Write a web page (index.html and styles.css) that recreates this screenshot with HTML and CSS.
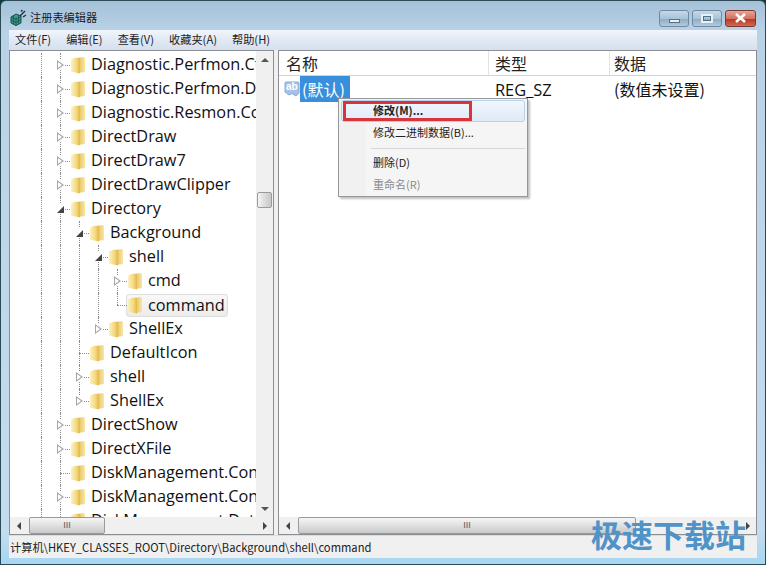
FILE: index.html
```html
<!DOCTYPE html>
<html lang="zh-CN">
<head>
    <meta charset="UTF-8">
    <title>注册表编辑器</title>
    <link rel="stylesheet" href="styles.css">
</head>
<body>
    <svg width="0" height="0" class="defs">
        <defs>
            <linearGradient id="fold" x1="0" y1="0" x2="1" y2="0">
                <stop offset="0" stop-color="#fbf1c0"/>
                <stop offset="0.6" stop-color="#f4da80"/>
                <stop offset="1" stop-color="#e3b54e"/>
            </linearGradient>
            <linearGradient id="foldBack" x1="0" y1="0" x2="1" y2="0">
                <stop offset="0" stop-color="#c9962f"/>
                <stop offset="0.4" stop-color="#eccb6c"/>
                <stop offset="1" stop-color="#f6e7a8"/>
            </linearGradient>
            <symbol id="folder" viewBox="0 0 16 18">
                <path d="M7 2 14 1 15 2.5V16L8 17Z" fill="url(#foldBack)"/>
                <path d="M1 3.5 6 1.5 10 3V17.5L5 16.5 1 15.5Z" fill="url(#fold)"/>
            </symbol>
        </defs>
    </svg>

    <div class="window">
        <header class="titlebar">
            <svg class="app-icon" width="17" height="17" viewBox="0 0 17 17">
                <path d="M1 8 6 5 11 7V14L6 16.5 1 14Z" fill="#3d9a8c" stroke="#17504c"/>
                <path d="M6 8.5V16.5M1 8 6 10.5 11 7.5M1 11 6 13.5 11 10.5M3.5 6.5V15.5M8.5 6V15" stroke="#17504c" stroke-width="0.8" fill="none"/>
                <path d="M10 7 15 2M11 2.5 12.5 1M13 8 16 6" stroke="#26393a" stroke-width="1.5"/>
            </svg>
            <span class="app-title">注册表编辑器</span>
            <div class="caption-btns">
                <div class="cap-btn"><span class="min-glyph"></span></div>
                <div class="cap-btn"><span class="max-glyph"></span></div>
                <div class="cap-btn close">
                    <svg width="13" height="10" viewBox="0 0 13 10">
                        <path d="M2 1 11 9M11 1 2 9" stroke="#fff" stroke-width="2.6"/>
                    </svg>
                </div>
            </div>
        </header>

        <nav class="menubar">
            <span>文件(F)</span>
            <span>编辑(E)</span>
            <span>查看(V)</span>
            <span>收藏夹(A)</span>
            <span>帮助(H)</span>
        </nav>

        <main class="panes">
            <section class="tree-pane">
                <div class="tree-body">
                    <ul class="tree" id="tree"></ul>
                    <div class="vscroll">
                        <div class="sb-btn"><span class="arr up"></span></div>
                        <div class="vtrack"><div class="vthumb"></div></div>
                        <div class="sb-btn"><span class="arr down"></span></div>
                    </div>
                </div>
                <div class="hscroll">
                    <div class="sb-btn"><span class="arr left"></span></div>
                    <div class="htrack"><div class="hthumb"><span class="grip">III</span></div></div>
                    <div class="sb-btn"><span class="arr right"></span></div>
                </div>
            </section>

            <section class="list-pane">
                <div class="list-head">
                    <div class="col col-name">名称</div>
                    <div class="col col-type">类型</div>
                    <div class="col col-data">数据</div>
                </div>
                <div class="list-body">
                    <div class="list-row">
                        <div class="col-name value-cell">
                            <svg class="ab-icon" width="16" height="16" viewBox="0 0 16 16">
                                <path d="M1 2Q1 1 2 1H14Q15 1 15 2V12L12 15 8 12.5 5 14 1 11Z" fill="#a6c2ea" stroke="#8aa8d2"/>
                            </svg>
                            <span class="ab-text">ab</span>
                            <span class="value-name">(默认)</span>
                        </div>
                        <div class="col-type">REG_SZ</div>
                        <div class="col-data">(数值未设置)</div>
                    </div>
                </div>
                <div class="hscroll">
                    <div class="sb-btn"><span class="arr left"></span></div>
                    <div class="htrack"><div class="hthumb wide"><span class="grip">III</span></div></div>
                    <div class="sb-btn"><span class="arr right"></span></div>
                </div>

                <div class="context-menu">
                    <div class="menu-item hot"><b>修改(M)...</b></div>
                    <div class="menu-item">修改二进制数据(B)...</div>
                    <div class="menu-sep"></div>
                    <div class="menu-item">删除(D)</div>
                    <div class="menu-item off">重命名(R)</div>
                </div>
            </section>
        </main>

        <footer class="statusbar">计算机\HKEY_CLASSES_ROOT\Directory\Background\shell\command</footer>
    </div>

    <div class="watermark">极速下载站</div>

    <script src="tree.js"></script>
</body>
</html>
```

FILE: styles.css
```css
* {
    margin: 0;
    padding: 0;
    box-sizing: border-box;
}

html, body {
    width: 766px;
    height: 565px;
    overflow: hidden;
}

body {
    position: relative;
    background: #0e3a44;
    font-family: "Noto Sans CJK SC", "Noto Sans", sans-serif;
    color: #111;
}

.defs {
    position: absolute;
}

.window {
    height: 565px;
    display: flex;
    flex-direction: column;
    padding: 0 8px 6px;
    border: 1px solid #2c4a55;
    border-radius: 6px 6px 0 0;
    background: linear-gradient(180deg, #a4c1d9 0, #b9d2e6 30px, #c4dcef 530px, #a6d6f2 100%);
}

.titlebar {
    height: 29px;
    flex: none;
    display: flex;
    align-items: center;
}

.app-icon {
    margin: 3px 0 0 1px;
}

.app-title {
    margin: 3px 0 0 3px;
    font-size: 11.2px;
    color: #1a1a1a;
}

.caption-btns {
    margin-left: auto;
    margin-right: 1px;
    margin-top: 5px;
    display: flex;
    gap: 3px;
}

.cap-btn {
    width: 30px;
    height: 17px;
    border: 1px solid #6f8aa0;
    border-radius: 3px;
    background: linear-gradient(180deg, #c5d9e8 0, #a9c3d8 50%, #8fadc6 55%, #b2cadc 100%);
    display: flex;
    align-items: center;
    justify-content: center;
}

.cap-btn.close {
    width: 31px;
    border-color: #7a3a34;
    background: linear-gradient(180deg, #e6a597 0, #d4705f 50%, #b73a26 55%, #cf6a50 100%);
}

.min-glyph {
    display: block;
    width: 11px;
    height: 4px;
    margin-top: 5px;
    background: #e8f0f6;
    border: 1px solid #55718a;
}

.max-glyph {
    display: block;
    width: 12px;
    height: 9px;
    border: 2px solid #e8f0f6;
    outline: 1px solid #55718a;
    outline-offset: -3px;
}

.menubar {
    height: 20px;
    flex: none;
    display: flex;
    align-items: center;
    gap: 15px;
    padding: 0 0 2px 6px;
    font-size: 11.2px;
    color: #222;
    background: linear-gradient(180deg, #f2f6fb 0, #e0e9f4 50%, #d6e0ee 100%);
}

.panes {
    flex: 1;
    min-height: 0;
    display: flex;
    gap: 4px;
    background: #f0f0f0;
}

.tree-pane,
.list-pane {
    display: flex;
    flex-direction: column;
    background: #fff;
    border: 1px solid #8b8f94;
    height: 485px;
}

.tree-pane {
    width: 265px;
    flex: none;
}

.list-pane {
    flex: 1;
    min-width: 0;
    position: relative;
}

.tree-body {
    flex: 1;
    min-height: 0;
    display: flex;
}

.tree {
    flex: 1;
    min-width: 0;
    overflow: hidden;
    list-style: none;
    padding: 2px 0 0 22px;
    font-family: "Open Sans", "Noto Sans", sans-serif;
    font-size: 16.3px;
    color: #111;
}

.tree-row {
    height: 24px;
    display: flex;
    align-items: center;
    white-space: nowrap;
}

.guide {
    width: 19px;
    height: 24px;
    flex: none;
    position: relative;
}

.guide.line::before {
    content: "";
    position: absolute;
    left: 9px;
    top: 0;
    bottom: 0;
    border-left: 1px dotted #8a8a8a;
}

.guide.half::before {
    content: "";
    position: absolute;
    left: 9px;
    top: 0;
    bottom: 12px;
    border-left: 1px dotted #8a8a8a;
}

.guide.stub::after {
    content: "";
    position: absolute;
    left: 9px;
    top: 12px;
    width: 10px;
    border-top: 1px dotted #8a8a8a;
}

.twisty {
    position: absolute;
    left: 5px;
    top: 7px;
    width: 8px;
    height: 10px;
    background: #fff;
    z-index: 1;
}

.twisty.closed::before {
    content: "";
    position: absolute;
    left: 1px;
    top: 0;
    border-left: 7px solid #a6a6a6;
    border-top: 5px solid transparent;
    border-bottom: 5px solid transparent;
}

.twisty.closed::after {
    content: "";
    position: absolute;
    left: 2px;
    top: 2px;
    border-left: 4px solid #fff;
    border-top: 3px solid transparent;
    border-bottom: 3px solid transparent;
}

.twisty.open::before {
    content: "";
    position: absolute;
    left: 1px;
    top: 2px;
    border-right: 7px solid #444;
    border-top: 7px solid transparent;
}

.folder {
    width: 16px;
    height: 18px;
    flex: none;
}

.tree-label {
    margin-left: 5px;
    padding: 0 3px 1px 0;
    height: 22px;
    line-height: 21px;
    display: block;
}

.tree-row.current .folder {
    position: relative;
    z-index: 1;
}

.tree-row.current .tree-label {
    margin-left: -17px;
    padding: 0 2px 0 21px;
    background: linear-gradient(180deg, #f8f8f8, #ececec);
    border: 1px solid #dedede;
    border-radius: 3px;
    height: 23px;
    line-height: 20px;
}

.vscroll {
    width: 17px;
    flex: none;
    display: flex;
    flex-direction: column;
    background: #f0f0f0;
}

.vtrack {
    flex: 1;
    padding-top: 124px;
}

.vthumb {
    height: 16px;
    margin: 0 1px;
    border: 1px solid #9a9a9a;
    border-radius: 2px;
    background: linear-gradient(90deg, #f4f4f4, #dcdcdc 50%, #c8c8c8);
}

.sb-btn {
    width: 17px;
    height: 17px;
    flex: none;
    display: flex;
    align-items: center;
    justify-content: center;
}

.arr {
    display: block;
    width: 0;
    height: 0;
}

.arr.up {
    border-left: 4px solid transparent;
    border-right: 4px solid transparent;
    border-bottom: 4px solid #555;
}

.arr.down {
    border-left: 4px solid transparent;
    border-right: 4px solid transparent;
    border-top: 4px solid #555;
}

.arr.left {
    border-top: 4px solid transparent;
    border-bottom: 4px solid transparent;
    border-right: 4px solid #444;
}

.arr.right {
    border-top: 4px solid transparent;
    border-bottom: 4px solid transparent;
    border-left: 4px solid #444;
}

.hscroll {
    height: 17px;
    flex: none;
    display: flex;
    background: #f0f0f0;
}

.htrack {
    flex: 1;
    display: flex;
    padding-left: 2px;
}

.hthumb {
    width: 76px;
    height: 17px;
    border: 1px solid #9a9a9a;
    border-radius: 2px;
    background: linear-gradient(180deg, #f6f6f6, #e0e0e0 50%, #c9c9c9);
    display: flex;
    align-items: center;
    justify-content: center;
}

.hthumb.wide {
    width: 338px;
}

.grip {
    font: 9px/1 "Liberation Sans", sans-serif;
    color: #555;
}

.list-head {
    height: 25px;
    flex: none;
    display: flex;
    border-bottom: 1px solid #d5d5d5;
    font-size: 16px;
    color: #222;
}

.col {
    padding-left: 7px;
    line-height: 25px;
    border-right: 1px solid #e3e3e3;
}

.col-name {
    width: 210px;
}

.col-type {
    width: 121px;
}

.col-data {
    flex: 1;
    border-right: 0;
}

.col.col-type {
    padding-left: 6px;
}

.col.col-data {
    padding-left: 4px;
}

.list-body {
    flex: 1;
    min-height: 0;
}

.list-row {
    height: 26px;
    display: flex;
    align-items: center;
    font-size: 16px;
}

.list-row .col-type {
    padding-left: 6px;
    font-family: "Open Sans", "Noto Sans", sans-serif;
    font-size: 16.4px;
}

.list-row .col-data {
    padding-left: 4px;
}

.value-cell {
    display: flex;
    align-items: center;
    padding-left: 5px;
    position: relative;
}

.ab-text {
    position: absolute;
    left: 7px;
    top: 5px;
    font: bold 10px/12px "Liberation Sans", sans-serif;
    color: #fff;
}

.value-name {
    height: 26px;
    line-height: 26px;
    padding: 0 5px 0 2px;
    color: #fff;
    background: #3a8fdd;
}

.context-menu {
    position: absolute;
    left: 59px;
    top: 47px;
    width: 190px;
    height: 99px;
    padding: 1px 2px;
    border: 1px solid #979797;
    background: linear-gradient(90deg, #f1f1f1 0, #f1f1f1 26px, #e3e3e3 26px, #fff 27px, #f5f5f5 27px);
    font-size: 11px;
    box-shadow: 2px 2px 2px rgba(0, 0, 0, 0.25);
}

.menu-item {
    height: 22px;
    line-height: 20px;
    padding-left: 32px;
    color: #222;
}

.menu-item.hot {
    border: 1px solid #b8d2ee;
    border-radius: 3px;
    background: linear-gradient(180deg, #f3f7fc, #dfe9f8);
    line-height: 18px;
    padding-left: 31px;
}

/* red annotation box, pseudo elements are not border-box here */
.menu-item.hot::after {
    content: "";
    position: absolute;
    left: 4px;
    top: 2px;
    width: 123px;
    height: 14px;
    border: 3px solid #d8343a;
}

.menu-item.off {
    color: #8a8a8a;
}

.menu-sep {
    height: 1px;
    margin: 4px 0 3px 30px;
    background: #d7d7d7;
}

.statusbar {
    height: 23px;
    flex: none;
    padding-left: 1px;
    font-size: 11.2px;
    line-height: 22px;
    color: #222;
    background: #f0f0f0;
    border-top: 1px solid #dcdcdc;
}

.watermark {
    position: absolute;
    right: 20px;
    top: 516px;
    font-size: 31px;
    line-height: 36px;
    font-weight: 700;
    color: #4f93c9;
}
```

FILE: tree.js
```js
// guides: one entry per column, "|" line, "." last child
const rows = [
    ["Diagnostic.Perfmon.Ctl", 0, "closed", "|"],
    ["Diagnostic.Perfmon.Data", 0, "closed", "|"],
    ["Diagnostic.Resmon.Config", 0, "closed", "|"],
    ["DirectDraw", 0, "closed", "|"],
    ["DirectDraw7", 0, "closed", "|"],
    ["DirectDrawClipper", 0, "closed", "|"],
    ["Directory", 0, "open", "|"],
    ["Background", 1, "open", "||"],
    ["shell", 2, "open", "|||"],
    ["cmd", 3, "closed", "||||"],
    ["command", 3, "", "|||.", "current"],
    ["ShellEx", 2, "closed", "||."],
    ["DefaultIcon", 1, "", "||"],
    ["shell", 1, "closed", "||"],
    ["ShellEx", 1, "closed", "|."],
    ["DirectShow", 0, "closed", "|"],
    ["DirectXFile", 0, "closed", "|"],
    ["DiskManagement.Connection", 0, "", "|"],
    ["DiskManagement.Control", 0, "closed", "|"],
    ["DiskManagement.DataObject", 0, "", "|"],
];

function rowHtml([label, level, state, guides, extra]) {
    let cols = '<span class="guide line"></span>';
    for (let i = 0; i < level; i++) {
        cols += `<span class="guide ${guides[i] === "." ? "" : "line"}"></span>`;
    }
    const last = guides[level] === "." ? "half" : "line";
    const twisty = state ? `<span class="twisty ${state}"></span>` : "";
    cols += `<span class="guide ${last} stub">${twisty}</span>`;
    return `<li class="tree-row ${extra || ""}">${cols}` +
        `<svg class="folder"><use href="#folder"/></svg>` +
        `<span class="tree-label">${label}</span></li>`;
}

document.getElementById("tree").innerHTML = rows.map(rowHtml).join("");
```
